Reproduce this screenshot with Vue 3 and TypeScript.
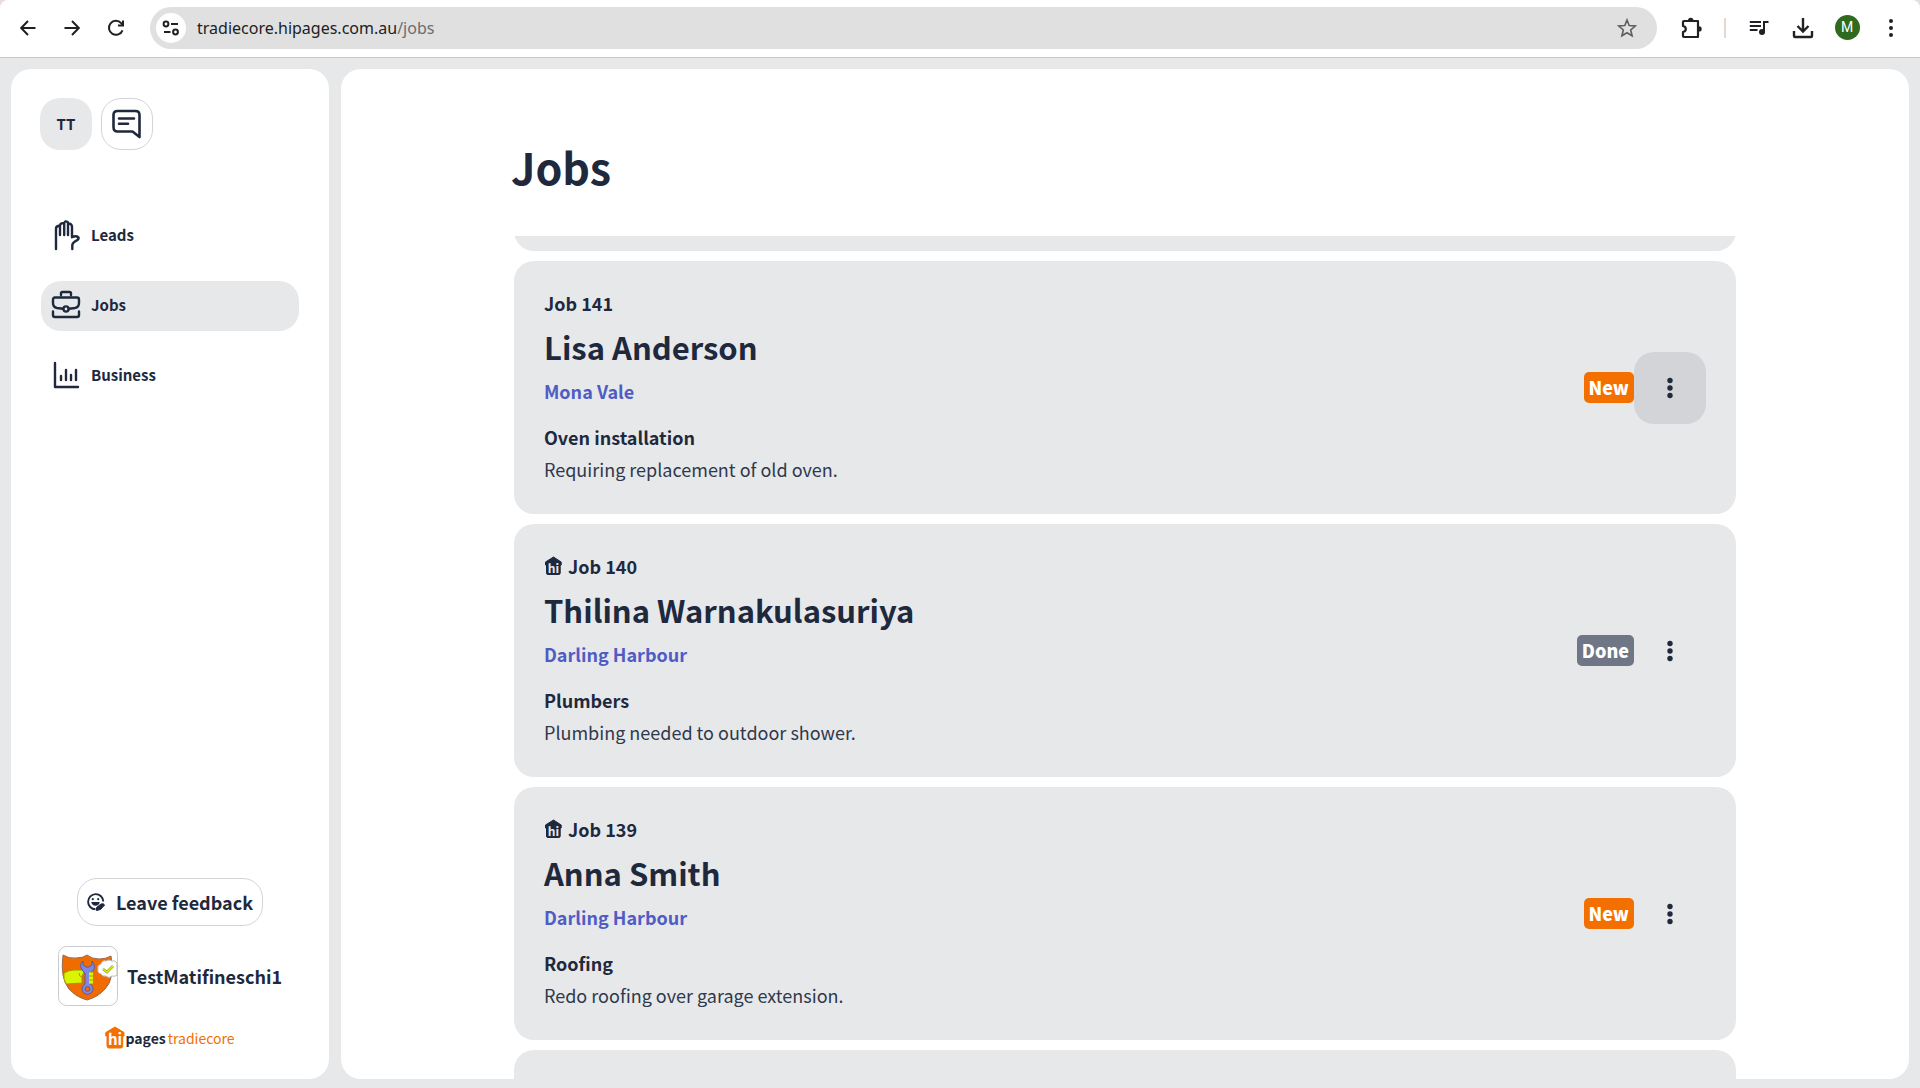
<script setup lang="ts">
interface Job {
  id: number
  customer: string
  suburb: string
  title: string
  description: string
  status: 'New' | 'Done'
  fromHipages: boolean
  menuActive: boolean
}

const jobs: Job[] = [
  { id: 141, customer: 'Lisa Anderson', suburb: 'Mona Vale', title: 'Oven installation', description: 'Requiring replacement of old oven.', status: 'New', fromHipages: false, menuActive: true },
  { id: 140, customer: 'Thilina Warnakulasuriya', suburb: 'Darling Harbour', title: 'Plumbers', description: 'Plumbing needed to outdoor shower.', status: 'Done', fromHipages: true, menuActive: false },
  { id: 139, customer: 'Anna Smith', suburb: 'Darling Harbour', title: 'Roofing', description: 'Redo roofing over garage extension.', status: 'New', fromHipages: true, menuActive: false },
]
</script>

<template>
  <div class="window">
    <header class="toolbar">
      <button class="tool" aria-label="Back">
        <svg width="16" height="16" viewBox="0 0 16 16" class="line"><path d="M15.500 8H1.500M8 1L1.200 8L8 15" /></svg>
      </button>
      <button class="tool" aria-label="Forward">
        <svg width="16" height="16" viewBox="0 0 16 16" class="line"><path d="M.5 8H14.500M8 1L14.800 8L8 15" /></svg>
      </button>
      <button class="tool" aria-label="Reload">
        <svg width="18" height="18" viewBox="0 0 18 18" class="line"><path d="M15.500 11.300A7 7 0 1 1 14.200 4.200L15.800 6" /><path d="M16 1.500V6.500H11" /></svg>
      </button>
      <div class="address">
        <button class="site-info" aria-label="View site information">
          <svg width="18" height="16" viewBox="0 0 18 16" class="line"><circle cx="4" cy="4" r="2.400" /><path d="M9 4H16M2 12H8.500" /><circle cx="13.500" cy="12" r="2.400" /></svg>
        </button>
        <div class="url">tradiecore.hipages.com.au<span class="url-path">/jobs</span></div>
        <button class="star" aria-label="Bookmark this tab">
          <svg width="20" height="20" viewBox="0 0 20 20"><path d="M10 2L12.200 7.500L18.300 8L13.700 12L15.100 17.800L10 14.700L4.900 17.800L6.300 12L1.700 8L7.800 7.500Z" fill="none" stroke="#5c5e61" stroke-width="1.600" /></svg>
        </button>
      </div>
      <button class="tool puzzle" aria-label="Extensions">
        <svg width="22" height="22" viewBox="0 0 22 22"><path d="M3 4H17V20H3Q2 20 2 19V15Q4.800 14.500 4.800 12T2 9V5Q2 4 3 4Z" fill="none" stroke="#202124" stroke-width="2.200" stroke-linejoin="round" /><path d="M7 3.500a2.700 2.700 0 0 1 5.400 0ZM18 9.200a2.700 2.700 0 0 1 0 5.400Z" fill="#202124" /></svg>
      </button>
      <span class="divider"></span>
      <button class="tool" aria-label="Media controls">
        <svg width="20" height="18" viewBox="0 0 20 18"><path d="M.8 3H12M.8 7H12M.8 11H8.500M15 14V2.900H19.500" fill="none" stroke="#202124" stroke-width="2" /><circle cx="13" cy="13" r="3" fill="#202124" /></svg>
      </button>
      <button class="tool" aria-label="Downloads">
        <svg width="22" height="22" viewBox="0 0 22 22" class="line bold"><path d="M11 1V14M5.500 9L11 14.500L16.500 9M2 14V19Q2 20 3 20H19Q20 20 20 19V14" /></svg>
      </button>
      <button class="tool" aria-label="Profile"><span class="profile">M</span></button>
      <button class="tool" aria-label="Browser menu">
        <svg width="6" height="20" viewBox="0 0 6 20" fill="#202124"><circle cx="3" cy="3" r="2" /><circle cx="3" cy="10" r="2" /><circle cx="3" cy="17" r="2" /></svg>
      </button>
    </header>

    <div class="page">
      <aside class="sidebar">
        <div class="top-actions">
          <button class="account">TT</button>
          <button class="messages" aria-label="Messages">
            <svg width="30" height="30" viewBox="0 0 30 30" fill="none" stroke="#1e293e" stroke-width="2.600" stroke-linejoin="round" stroke-linecap="round"><path d="M27.500 28V6Q27.500 2 23.500 2H5.500Q1.500 2 1.500 6V18Q1.500 22.500 5.500 22.500H20.500Z" /><path d="M7 9.500H22M7 14.800H16" /></svg>
          </button>
        </div>

        <nav class="nav">
          <a href="#leads">
            <svg width="30" height="32" viewBox="0 0 30 32" class="nav-icon"><path d="M5 30V9.500Q5 7 9 6.500V16M9 7Q9 3.500 13.200 4.500V16M13.200 4.500Q14 .8 17 3.500V16M17 4.500Q21 4.500 21 8V18.200Q25 16.300 27.500 18.500Q28 20.500 25 21.800Q21.500 24 21.300 26V30" /></svg>
            Leads
          </a>
          <a href="#jobs" class="current" aria-current="page">
            <svg width="30" height="32" viewBox="0 0 30 32" class="nav-icon"><path d="M10 6V4.500Q10 3 11.500 3H18.500Q20 3 20 4.500V6M17.800 19.800L24 19Q28 18.200 28 14V10.500Q28 8.500 26 8.500H4Q2 8.500 2 10.500V14Q2 18.200 6 19L12.200 19.800M2 22.500V26Q2 28 4 28H26Q28 28 28 26V22.500" /><circle cx="15" cy="20" r="2.600" /></svg>
            Jobs
          </a>
          <a href="#business">
            <svg width="30" height="32" viewBox="0 0 30 32" class="nav-icon"><path d="M4 4V28H27M10 17V21M15 11V21M20 16V21M25 11V21" /></svg>
            Business
          </a>
        </nav>

        <div class="footer">
          <button class="feedback">
            <svg width="18" height="18" viewBox="0 0 18 18"><path d="M16.300 8.500A7.600 7.600 0 1 0 8.500 16.300" fill="none" stroke="#1e293e" stroke-width="1.900" /><circle cx="5.800" cy="6.200" r="1.100" fill="#1e293e" /><circle cx="11.200" cy="6.200" r="1.100" fill="#1e293e" /><path d="M4.300 9H12.700Q12 12.800 8.500 12.800T4.300 9Z" fill="#1e293e" /><path d="M9.500 17.500V14.500L14 11Q16.500 10 17.600 12L13.500 16.500Z" fill="#1e293e" stroke="#1e293e" stroke-linejoin="round" /></svg>
            Leave feedback
          </button>
          <div class="business">
            <svg class="avatar" width="60" height="60" viewBox="0 0 60 60">
              <rect x=".5" y=".5" width="59" height="59" rx="8" fill="#fff" stroke="#c9cad0" />
              <path d="M5 9Q11 13 18 12Q25 12 29 9Q34 13 41 13Q48 13 53 10Q57 33 47 43Q40 51 29 54Q18 51 11 43Q2 32 5 9Z" fill="#f06c00" stroke="#9a6a50" />
              <path d="M6 27Q11 24 16 24H25Q27 26 24 30V37L8 38Q5 33 6 27Z" fill="#d9f500" stroke="#9c8a00" stroke-width=".8" />
              <path d="M25 15Q21 18 23 22T27 27V38A5.500 5.500 0 1 0 32 38V27Q36 25 36.500 22T34 15V19L31 21H28L25 19Z" fill="#7c87e6" stroke="#4b5397" stroke-width=".8" />
              <circle cx="29.500" cy="43" r="2.400" fill="#f06c00" stroke="#4b5397" stroke-width=".8" />
              <path d="M31 26H35.500V38H31M31 30H35.500M31 34H35.500M21 27Q21 31 24 31" fill="#d9f500" stroke="#9c8a00" stroke-width=".8" />
              <path d="M59 17Q57 14 54 15Q51 13 48 15Q44 14 43 18Q39 19 40 23Q39 27 43 28Q45 31 48 30Q51 33 54 30Q57 31 59 29Z" fill="#fff" stroke="#b9b9b9" />
              <path d="M45 23L49 26L55 20" fill="none" stroke="#8f9d24" stroke-width="2.600" /><path d="M45 23L49 26L55 20" fill="none" stroke="#d9f500" stroke-width="1.400" />
            </svg>
            <span>TestMatifineschi1</span>
          </div>
          <div class="brand">
            <svg width="20" height="24" viewBox="0 0 20 24"><path d="M10 1L19 6.500V10H17.700V20Q17.700 22 15.700 22H4Q2 22 2 20V10H.8V6.500Z" fill="#f37000" stroke="#f37000" stroke-linejoin="round" /><text x="10" y="19" text-anchor="middle" class="brand-hi" fill="#fff">hi</text></svg>
            <span class="brand-pages">pages</span><span class="brand-core">tradiecore</span>
          </div>
        </div>
      </aside>

      <main class="main">
        <h1>Jobs</h1>
        <div class="scroller">
          <div class="card scrolled-past"></div>
          <article v-for="job in jobs" :key="job.id" class="card">
            <div class="details">
              <div class="number">
                <svg v-if="job.fromHipages" width="18" height="20" viewBox="0 0 18 20"><path d="M9.500 1L17.200 6V9H16.200V17Q16.200 18.500 14.700 18.500H4Q2.500 18.500 2.500 17V9H1.500V6Z" fill="#1e293e" stroke="#1e293e" stroke-linejoin="round" /><text x="9.500" y="17" text-anchor="middle" class="house-hi" fill="#e7e8ea">hi</text></svg>
                Job {{ job.id }}
              </div>
              <h2>{{ job.customer }}</h2>
              <a class="suburb" href="#map">{{ job.suburb }}</a>
              <h3>{{ job.title }}</h3>
              <p>{{ job.description }}</p>
            </div>
            <span class="badge" :class="{ done: job.status === 'Done' }">{{ job.status }}</span>
            <button class="menu" :class="{ active: job.menuActive }" :aria-label="`Options for job ${job.id}`">
              <svg width="6" height="22" viewBox="0 0 6 22" fill="#1e293e"><circle cx="3" cy="3.500" r="2.700" /><circle cx="3" cy="11" r="2.700" /><circle cx="3" cy="18.500" r="2.700" /></svg>
            </button>
          </article>
          <div class="card upcoming"></div>
        </div>
      </main>
    </div>
  </div>
</template>

<style>
body {
  margin: 0;
  background: #e7e8ea;
}
</style>

<style scoped>
.window {
  display: flex;
  flex-direction: column;
  height: 100vh;
  overflow: hidden;
  color: #1e293e;
  font-family: "Noto Sans CJK SC", "Noto Sans CJK JP", "Open Sans", sans-serif;
  font-size: 18px;
  line-height: 24px;
  background: linear-gradient(#e8dcd8 20px, #e7e8ea 20px);
}
button {
  display: flex;
  align-items: center;
  justify-content: center;
  padding: 0;
  border: 0;
  background: none;
  color: inherit;
  font: inherit;
  font-weight: 700;
}
h1, h2, h3, p {
  margin: 0;
}
a {
  color: inherit;
  text-decoration: none;
}
svg {
  flex: none;
}
.line {
  fill: none;
  stroke: #202124;
  stroke-width: 2;
}
.line.bold {
  stroke-width: 2.4;
}

.toolbar {
  flex: none;
  display: flex;
  align-items: center;
  box-sizing: border-box;
  height: 58px;
  padding: 0 7px 2px 6px;
  border-bottom: 1px solid #c8c9c7;
  border-radius: 8px 8px 0 0;
  background: #fff;
}
.tool {
  width: 44px;
  height: 44px;
}
.address {
  flex: 1;
  display: flex;
  align-items: center;
  height: 42px;
  margin: 0 13px 0 12px;
  padding: 0 20px 0 6px;
  border-radius: 21px;
  background: #e0e0e0;
}
.site-info {
  width: 30px;
  height: 30px;
  margin-right: 11px;
  border-radius: 50%;
  background: #fff;
}
.url {
  flex: 1;
  color: #202124;
  font-family: "Noto Sans", "Open Sans", sans-serif;
  font-size: 16px;
}
.url-path {
  color: #6b6d70;
}
.divider {
  width: 2px;
  height: 20px;
  margin: 0 11px 0 10px;
  background: #e4d8d5;
}
.profile {
  width: 25px;
  border-radius: 50%;
  background: #2f6b1e;
  color: #fff;
  font: 400 14px/25px Roboto, sans-serif;
}

.page {
  flex: 1;
  display: flex;
  gap: 12px;
  min-height: 0;
  padding: 11px 11px 9px;
  background: #e7e8ea;
}
.sidebar {
  flex: none;
  display: flex;
  flex-direction: column;
  box-sizing: border-box;
  width: 318px;
  padding: 29px 30px;
  border-radius: 20px;
  background: #fff;
}
.top-actions {
  display: flex;
  gap: 9px;
  margin-left: -1px;
}
.account, .messages {
  box-sizing: border-box;
  width: 52px;
  height: 52px;
  border-radius: 20px;
}
.account {
  background: #e7e8ea;
  font-size: 15px;
}
.messages {
  border: 1px solid #d3d4d8;
}
.nav {
  display: flex;
  flex-direction: column;
  gap: 20px;
  margin-top: 61px;
}
.nav a {
  display: flex;
  align-items: center;
  gap: 10px;
  box-sizing: border-box;
  height: 50px;
  padding: 0 10px 2px;
  border-radius: 20px;
  font-size: 15px;
  font-weight: 700;
}
.nav a.current {
  background: #e7e8ea;
}
.nav-icon {
  fill: none;
  stroke: #1e293e;
  stroke-width: 2.4;
  stroke-linecap: round;
  stroke-linejoin: round;
}
.footer {
  display: flex;
  flex-direction: column;
  align-items: center;
  margin-top: auto;
}
.feedback {
  gap: 11px;
  height: 48px;
  padding: 0 9px;
  border: 1px solid #d3d4d8;
  border-radius: 20px;
  box-sizing: border-box;
}
.business {
  display: flex;
  align-items: center;
  gap: 9px;
  margin: 20px 0;
  font-weight: 700;
}
.brand {
  display: flex;
  align-items: center;
  height: 24px;
  font-size: 14px;
}
.brand-hi {
  font-size: 15px;
  font-weight: 700;
}
.brand-pages {
  font-weight: 700;
}
.brand-core {
  margin-left: 2px;
  color: #f37000;
}

.main {
  flex: 1;
  display: flex;
  flex-direction: column;
  align-items: center;
  min-width: 0;
  padding: 65px 40px 0;
  border-radius: 20px;
  background: #fff;
}
h1 {
  width: 100%;
  max-width: 1228px;
  font-size: 43px;
  line-height: 64px;
}
.scroller {
  flex: 1;
  display: flex;
  flex-direction: column;
  gap: 10px;
  width: 100%;
  max-width: 1222px;
  min-height: 0;
  margin-top: 38px;
  overflow: hidden;
}
.card {
  flex: none;
  display: flex;
  align-items: center;
  padding: 0 30px;
  border-radius: 20px;
  background: #e7e8ea;
}
.scrolled-past {
  height: 63px;
  margin-top: -48px;
}
.upcoming {
  height: 120px;
}
.details {
  flex: 1;
  display: flex;
  flex-direction: column;
  align-items: flex-start;
  gap: 8px;
  padding: 30px 0 33px;
}
.number {
  display: flex;
  align-items: center;
  gap: 6px;
  font-weight: 700;
}
.house-hi {
  font-size: 12px;
  font-weight: 700;
}
h2 {
  font-size: 31px;
  line-height: 48px;
}
.suburb {
  color: #4f5cc4;
  font-weight: 700;
}
h3 {
  margin-top: 14px;
  font-size: 18px;
}
p {
  color: #2f394c;
}
.badge {
  padding: 0 5px;
  border-radius: 5px;
  background: #f37000;
  color: #fff;
  font-weight: 900;
  line-height: 31px;
}
.badge.done {
  background: #6f7685;
}
.menu {
  width: 72px;
  height: 72px;
  border-radius: 20px;
}
.menu.active {
  background: #d3d4d8;
}
</style>
